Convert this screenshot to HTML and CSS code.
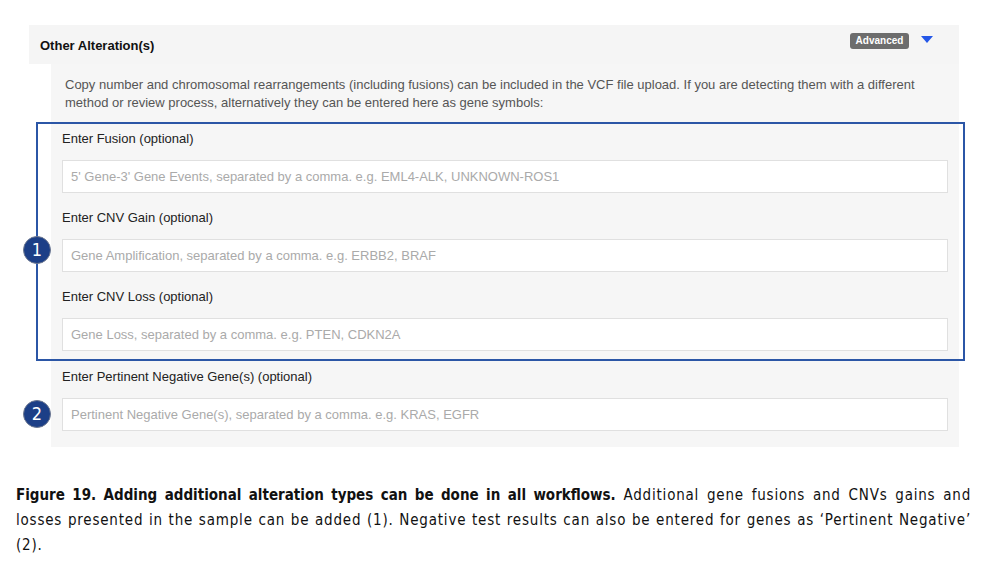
FILE: index.html
```html
<!DOCTYPE html>
<html>
<head>
  <title>Other Alteration(s)</title>
  <link rel="stylesheet" href="styles.css">
</head>
<body>
  <div class="panel">
    <div class="panel-header">
      <span class="panel-title">Other Alteration(s)</span>
      <div class="panel-tools">
        <span class="badge">Advanced</span>
        <svg class="caret" width="12" height="7" viewBox="0 0 12 7"><polygon points="0,0 12,0 6,7" fill="#2457e8"/></svg>
      </div>
    </div>

    <div class="panel-body">
      <p class="intro">Copy number and chromosomal rearrangements (including fusions) can be included in the VCF file upload. If you are detecting them with a different method or review process, alternatively they can be entered here as gene symbols:</p>

      <div class="group">
        <span class="marker marker-one">1</span>
        <div class="field">
          <label>Enter Fusion (optional)</label>
          <input type="text" placeholder="5' Gene-3' Gene Events, separated by a comma. e.g. EML4-ALK, UNKNOWN-ROS1">
        </div>
        <div class="field">
          <label>Enter CNV Gain (optional)</label>
          <input type="text" placeholder="Gene Amplification, separated by a comma. e.g. ERBB2, BRAF">
        </div>
        <div class="field">
          <label>Enter CNV Loss (optional)</label>
          <input type="text" placeholder="Gene Loss, separated by a comma. e.g. PTEN, CDKN2A">
        </div>
      </div>

      <div class="field field-negative">
        <span class="marker marker-two">2</span>
        <label>Enter Pertinent Negative Gene(s) (optional)</label>
        <input type="text" placeholder="Pertinent Negative Gene(s), separated by a comma. e.g. KRAS, EGFR">
      </div>
    </div>
  </div>

  <p class="caption"><b>Figure 19. Adding additional alteration types can be done in all workflows.</b> Additional gene fusions and CNVs gains and losses presented in the sample can be added (1). Negative test results can also be entered for genes as ‘Pertinent Negative’ (2).</p>
</body>
</html>
```

FILE: styles.css
```css
body {
  margin: 0;
  padding: 0;
  background-color: #fff;
  font-family: "Liberation Sans", Arial, sans-serif;
  color: #222;
}

.panel {
  margin: 25px 0 0 29px;
  width: 930px;
}

.panel-header {
  height: 39px;
  background-color: #f5f5f5;
  display: flex;
  justify-content: space-between;
  align-items: center;
  padding: 0 26px 0 11px;
}

.panel-title {
  font-size: 13px;
  font-weight: bold;
  color: #111;
  margin-top: 2px;
}

.panel-tools {
  display: flex;
  align-items: center;
  gap: 12px;
  margin-top: -8px;
}

.badge {
  background-color: #6d6d6d;
  color: #fff;
  font-size: 10px;
  font-weight: bold;
  height: 16px;
  line-height: 16px;
  width: 59px;
  text-align: center;
  border-radius: 3px;
}

.caret {
  display: block;
  margin-top: -3px;
}

.panel-body {
  margin-left: 22px;
  background-color: #f6f6f6;
  padding: 12px 11px 16px 11px;
}

.intro {
  margin: 0 0 10px 3px;
  font-size: 13px;
  line-height: 18px;
  color: #555;
}

.group {
  position: relative;
  border: 2px solid #2b56a6;
  margin: 0 -17px 0 -26px;
  padding: 6px 15px 8px 24px;
}

.field {
  position: relative;
  margin-bottom: 16px;
}

.field:last-child {
  margin-bottom: 0;
}

.field label {
  display: block;
  font-size: 13px;
  line-height: 18px;
  color: #222;
  margin-bottom: 12px;
}

.field input {
  display: block;
  box-sizing: border-box;
  width: 100%;
  height: 33px;
  border: 1px solid #e0e0e0;
  background-color: #fff;
  padding: 0 8px;
  font-family: "Liberation Sans", Arial, sans-serif;
  font-size: 13px;
  color: #333;
}

.field input::placeholder {
  color: #aaa;
}

.field-negative {
  margin-top: 7px;
}

.marker {
  position: absolute;
  width: 28px;
  height: 28px;
  box-sizing: border-box;
  border-radius: 50%;
  border: 1.5px solid #6d7890;
  background-color: #1c3f87;
  color: #fff;
  font-family: "DejaVu Sans Condensed", "Liberation Sans", sans-serif;
  font-size: 18px;
  line-height: 25px;
  text-align: center;
}

.marker-one {
  left: -15px;
  top: 112px;
}

.marker-two {
  left: -39px;
  top: 32px;
}

.caption {
  margin: 36px 36px 0 16px;
  font-family: "DejaVu Sans Condensed", "Liberation Sans", sans-serif;
  font-size: 15px;
  line-height: 25px;
  letter-spacing: 0.8px;
  text-align: justify;
  color: #111;
}

.caption b {
  font-weight: bold;
  letter-spacing: 0;
}
```
